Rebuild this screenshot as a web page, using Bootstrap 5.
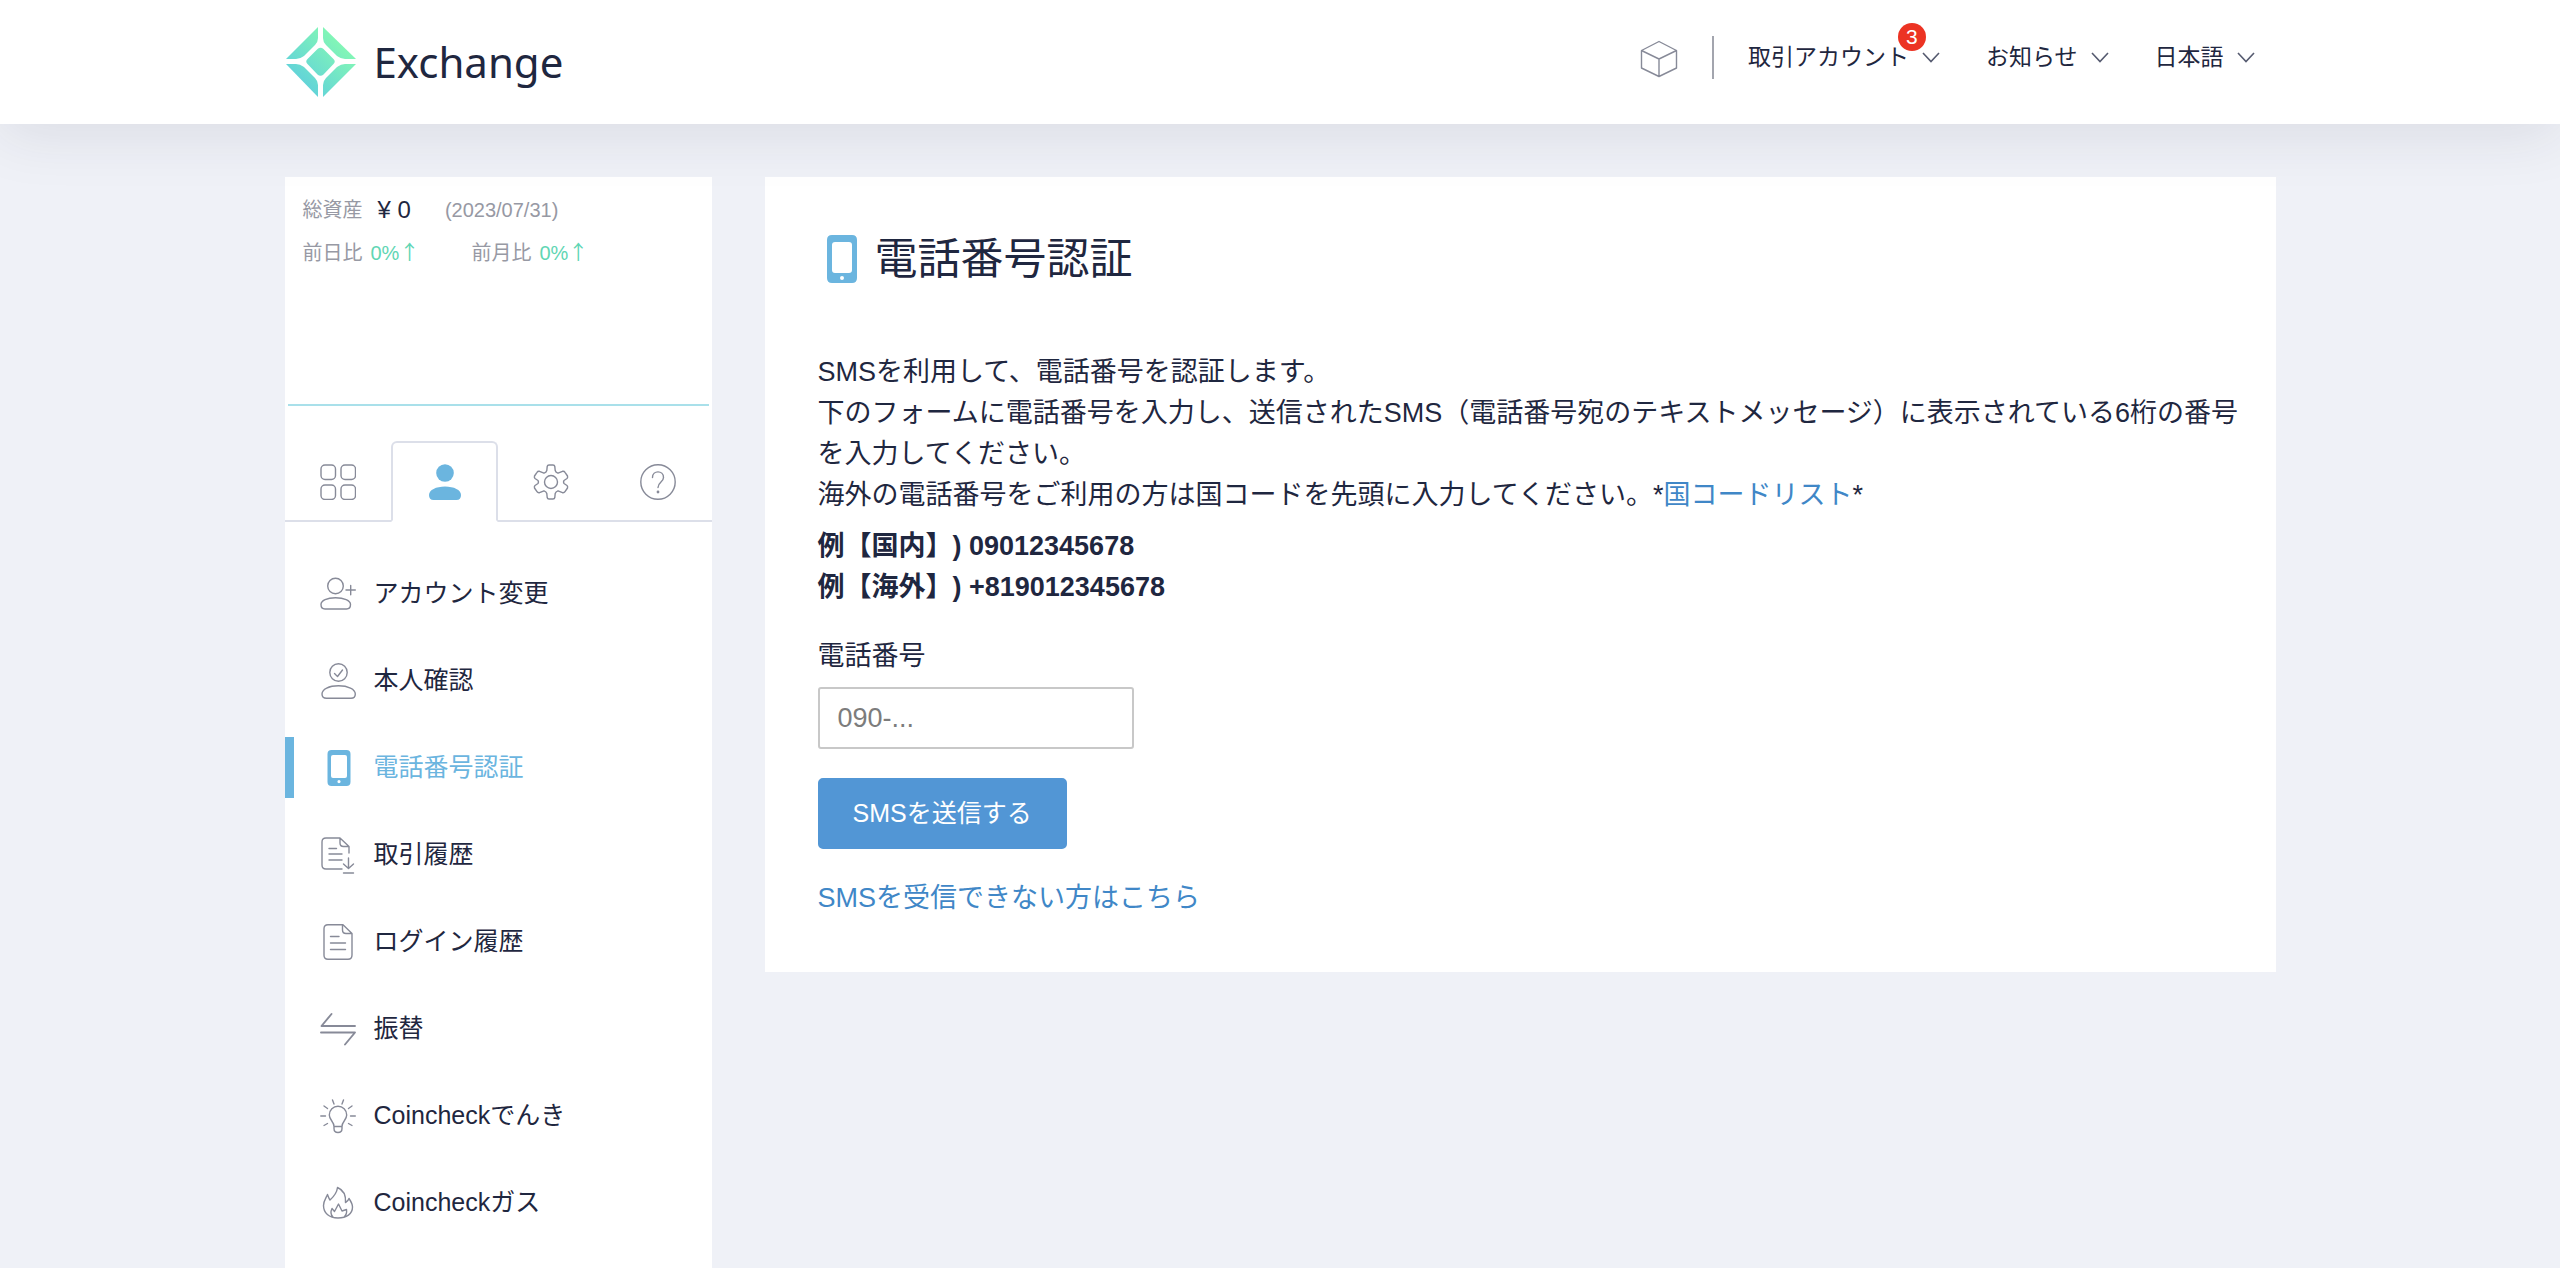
<!DOCTYPE html>
<html lang="ja">
<head>
<meta charset="utf-8">
<meta name="viewport" content="width=device-width, initial-scale=1">
<title>電話番号認証 | Exchange</title>
<link href="https://cdn.jsdelivr.net/npm/bootstrap@5.3.0/dist/css/bootstrap.min.css" rel="stylesheet">
<style>
  :root { --ink: #1f2740; --muted: #9799a4; --accent: #6bb5df; --link: #4087c7; --rule: #dcdfe9; }
  body { background: #eff1f7; color: var(--ink); font-family: "Liberation Sans", "Noto Sans CJK JP", sans-serif; font-size: 27px; line-height: 41px; text-spacing-trim: space-all; }
  a { color: var(--link); text-decoration: none; }
  .page-wrap { max-width: 1991px; width: 100%; }
  .site-header { height: 124px; box-shadow: 0 10px 60px rgba(40, 42, 56, .1); z-index: 2; }
  .brand-link { color: var(--ink); gap: 17px; }
  .brand-link span { font-family: "Noto Sans", sans-serif; font-size: 42px; line-height: 56px; }
  .top-nav { font-size: 23px; line-height: 36px; gap: 46px; padding: 0 21px 10px 0; }
  .top-nav .nav-link { color: var(--ink); gap: 13px; }
  .top-nav .nav-divider { width: 2px; height: 43px; background: #a3a5ae; margin: 0 -12px; }
  .count-badge { font-size: 21px; line-height: 28px; width: 28px; height: 28px; padding: 0; font-weight: 400; background: #ec3323; top: -2px; right: 14px; }
  .ico { fill: none; stroke: #878a98; stroke-width: 1.4; stroke-linecap: round; stroke-linejoin: round; flex: none; }
  .ico.is-solid { fill: var(--accent); stroke: none; }
  .page-body { gap: 53px; padding-top: 53px; }
  .side-panel { width: 427px; flex: none; }
  .asset-box { padding: 13px 18px 0; font-size: 20px; line-height: 40px; color: var(--muted); }
  .asset-box .total-num { font-size: 24px; color: var(--ink); margin: 0 34px 0 15px; }
  .asset-row + .asset-row { margin-top: 2px; }
  .asset-row .rate { color: #5fd6b4; margin: 0 52px 0 8px; }
  .asset-row .rate i { font-family: "Noto Sans CJK JP", sans-serif; font-style: normal; }
  .asset-chart { height: 133px; margin: 0 3px; border-bottom: 2px solid #a9e0ea; }
  .side-tabs { margin-top: 35px; border-bottom: 2px solid var(--rule); }
  .side-tabs .nav-link { border: 2px solid transparent; border-radius: 6px 6px 0 0; height: 81px; margin-bottom: -2px; padding: 0; }
  .side-tabs .nav-link.active { border-color: var(--rule) var(--rule) #fff; background: #fff; }
  .side-menu { gap: 26px; padding: 41px 0 24px; font-size: 25px; line-height: 37px; }
  .side-menu .nav-link { color: var(--ink); gap: 18px; height: 61px; padding: 0 26px; border-left: 9px solid transparent; }
  .side-menu .nav-link.active { color: var(--accent); border-left-color: var(--accent); }
  .main-panel { padding: 53px 32px 53px 53px; min-width: 0; }
  .main-title { font-size: 43px; line-height: 58px; gap: 9px; margin-bottom: 64px; font-weight: 400; }
  .intro { margin-bottom: 10px; }
  .examples { margin-bottom: 28px; font-weight: 700; }
  .phone-label { margin-bottom: 10px; }
  .phone-input { width: 316px; height: 62px; border: 2px solid #c8c8c8; border-radius: 3px; font-size: 27px; padding: 0 18px; margin-bottom: 29px; }
  .phone-input::placeholder { color: #7c7c7c; }
  .send-btn { --bs-btn-bg: #5296d5; --bs-btn-border-color: #5296d5; --bs-btn-hover-bg: #4387c6; --bs-btn-color: #fff; font-size: 25px; line-height: 37px; padding: 15px 33px; border-radius: 5px; border-width: 2px; margin-bottom: 29px; }
</style>
<script src="https://cdn.jsdelivr.net/npm/bootstrap@5.3.0/dist/js/bootstrap.bundle.min.js" defer></script>
</head>
<body class="d-flex flex-column min-vh-100">

<header class="site-header bg-white position-relative">
  <div class="page-wrap mx-auto h-100 d-flex align-items-center justify-content-between">
    <a class="brand-link d-flex align-items-center" href="#">
      <svg width="72" height="72" viewBox="0 0 72 72" aria-hidden="true">
        <defs><linearGradient id="mint" gradientUnits="userSpaceOnUse" x1="12" y1="60" x2="60" y2="12"><stop offset="0" stop-color="#5fd0dc"/><stop offset="1" stop-color="#86fab2"/></linearGradient></defs>
        <g fill="url(#mint)">
          <path d="M33 1V12Q33 16 30 19L19 30Q15 33 11 33H1Z"/>
          <path d="M38 1V12Q38 16 41 19L52 30Q56 33 60 33H71Z"/>
          <path d="M33 71V59Q33 55 30 52L19 41Q15 38 11 38H1Z"/>
          <path d="M38 71V59Q38 55 41 52L52 41Q56 38 60 38H71Z"/>
          <path d="M32.500 23Q35.500 20.500 38.500 23L48.500 33Q51 35.500 48.500 38L38.500 48.500Q35.500 51 32.500 48.500L22.500 38Q20 35.500 22.500 33Z"/>
        </g>
      </svg>
      <span>Exchange</span>
    </a>
    <nav class="top-nav nav align-items-center flex-nowrap" aria-label="メイン">
      <a class="d-flex pt-1" href="#" aria-label="ブロック">
        <svg class="ico" width="38" height="38" viewBox="0 0 38 38"><path d="M19 1.500L36.500 10.500V28L19 36.500L1.500 28V10.500ZM1.500 10.500L19 19L36.500 10.500M19 19V36.500"/></svg>
      </a>
      <div class="nav-divider"></div>
      <a class="nav-link p-0 d-flex align-items-center position-relative" href="#">取引アカウント
        <svg width="18" height="11" viewBox="0 0 18 11" fill="none" stroke="#565b70" stroke-width="1.600"><path d="M1 1L9 9.500L17 1"/></svg>
        <span class="count-badge badge rounded-circle position-absolute translate-middle-y">3</span>
      </a>
      <a class="nav-link p-0 d-flex align-items-center" href="#">お知らせ
        <svg width="18" height="11" viewBox="0 0 18 11" fill="none" stroke="#565b70" stroke-width="1.600"><path d="M1 1L9 9.500L17 1"/></svg>
      </a>
      <a class="nav-link p-0 d-flex align-items-center" href="#">日本語
        <svg width="18" height="11" viewBox="0 0 18 11" fill="none" stroke="#565b70" stroke-width="1.600"><path d="M1 1L9 9.500L17 1"/></svg>
      </a>
    </nav>
  </div>
</header>

<div class="page-body page-wrap mx-auto d-flex flex-grow-1">
  <aside class="side-panel bg-white">
    <div class="asset-box">
      <div class="asset-row d-flex align-items-center"><span>総資産</span><span class="total-num">¥ 0</span><span>(2023/07/31)</span></div>
      <div class="asset-row d-flex align-items-center"><span>前日比</span><span class="rate">0%<i>↑</i></span><span>前月比</span><span class="rate">0%<i>↑</i></span></div>
    </div>
    <div class="asset-chart"></div>

    <nav class="side-tabs nav nav-fill" aria-label="カテゴリ">
      <a class="nav-item nav-link d-flex align-items-center justify-content-center" href="#" aria-label="ホーム">
        <svg class="ico" width="36" height="36" viewBox="0 0 36 36"><rect x="1" y="1" width="14.500" height="14.500" rx="4"/><rect x="21" y="1" width="14.500" height="14.500" rx="4"/><rect x="1" y="21" width="14.500" height="14.500" rx="4"/><rect x="21" y="21" width="14.500" height="14.500" rx="4"/></svg>
      </a>
      <a class="nav-item nav-link active d-flex align-items-center justify-content-center" href="#" aria-label="アカウント">
        <svg class="ico is-solid" width="36" height="36" viewBox="0 0 36 36"><circle cx="18" cy="9" r="8.800"/><path d="M2 31C2 26 9 22.500 18 22.500S34 26 34 31Q34 36 29.500 36H6.500Q2 36 2 31Z"/></svg>
      </a>
      <a class="nav-item nav-link d-flex align-items-center justify-content-center" href="#" aria-label="設定">
        <svg class="ico" width="36" height="36" viewBox="0 0 36 36"><circle cx="18" cy="18" r="6.500"/><path d="M16 1H20Q21.500 1 21.800 2.500L22.200 6.500Q22.800 8.500 25 9.200L29.500 7.300Q31.200 7 32 8.300L34.500 12Q35 13.500 34 14.500L31 16.500Q30 18 31 19.500L34 21.500Q35 22.500 34.500 24L32 27.700Q31.200 29 29.500 28.700L25 26.800Q22.800 27.500 22.200 29.500L21.800 33.500Q21.500 35 20 35H16Q14.500 35 14.200 33.500L13.800 29.500Q13.200 27.500 11 26.800L6.500 28.700Q4.800 29 4 27.700L1.500 24Q1 22.500 2 21.500L5 19.500Q6 18 5 16.500L2 14.500Q1 13.500 1.500 12L4 8.300Q4.800 7 6.500 7.300L11 9.200Q13.200 8.500 13.800 6.500L14.200 2.500Q14.500 1 16 1Z"/></svg>
      </a>
      <a class="nav-item nav-link d-flex align-items-center justify-content-center" href="#" aria-label="ヘルプ">
        <svg class="ico" width="36" height="36" viewBox="0 0 36 36"><circle cx="18" cy="18" r="17.200"/><path d="M12.500 13.500C12.500 6 23.500 6 23.500 13.500C23.500 18 18 18 18 23.500"/><circle cx="18" cy="28" r=".7" fill="#878a98"/></svg>
      </a>
    </nav>

    <nav class="side-menu nav flex-column" aria-label="アカウントメニュー">
      <a class="nav-link d-flex align-items-center" href="#">
        <svg class="ico" width="36" height="36" viewBox="0 0 36 36"><circle cx="15.500" cy="10" r="7.800"/><path d="M1 28.500C1 24.500 7 21.800 15.500 21.800S30.500 24.500 30.500 28.500Q30.500 33 26.500 33H5Q1 33 1 28.500ZM26 14H35.300M30.700 9.500V18.800"/></svg>アカウント変更</a>
      <a class="nav-link d-flex align-items-center" href="#">
        <svg class="ico" width="36" height="36" viewBox="0 0 36 36"><circle cx="18.500" cy="9.500" r="8.700"/><path d="M2 31C2 26 9 22.800 18.500 22.800S35.300 26 35.300 31Q35.300 35.300 31 35.300H6.500Q2 35.300 2 31ZM14.500 10.500L17.500 13.500L22.500 7"/></svg>本人確認</a>
      <a class="nav-link active d-flex align-items-center" href="#" aria-current="page">
        <svg class="ico is-solid" width="36" height="36" viewBox="0 0 36 36"><path fill-rule="evenodd" d="M11.500 0H26.500Q30.500 0 30.500 4V32Q30.500 36 26.500 36H11.500Q7.500 36 7.500 32V4Q7.500 0 11.500 0ZM13 5Q11 5 11 7V26Q11 28 13 28H25Q27 28 27 26V7Q27 5 25 5ZM19 30A1.600 1.600 0 1 0 19 33.200A1.600 1.600 0 1 0 19 30Z"/></svg>電話番号認証</a>
      <a class="nav-link d-flex align-items-center" href="#">
        <svg class="ico" width="36" height="38" viewBox="0 0 36 38"><path d="M22 33H6Q2 33 2 29V6Q2 2 6 2H20L29 10.500V17M20 2V7Q20 10.500 23.500 10.500H29M9 12.500H16.500M9 18H22M9 24H22M28.500 22V32M23.500 28L28.500 32.500L33.500 28M23.500 37H33.500"/></svg>取引履歴</a>
      <a class="nav-link d-flex align-items-center" href="#">
        <svg class="ico" width="36" height="36" viewBox="0 0 36 36"><path d="M8 .8H23L32 9.500V31Q32 35.300 28 35.300H8Q4 35.300 4 31.300V4.800Q4 .8 8 .8ZM22.500 .8V6Q22.500 9.500 26 9.500H32M10.500 12.500H19M10.500 19H25.500M10.500 25.500H25.500"/></svg>ログイン履歴</a>
      <a class="nav-link d-flex align-items-center" href="#">
        <svg class="ico" width="36" height="36" viewBox="0 0 36 36"><path d="M35 15H1.500L11.500 3M1 21.500H35L25 33.500" stroke-width="1.900"/></svg>振替</a>
      <a class="nav-link d-flex align-items-center" href="#">
        <svg class="ico" width="36" height="36" viewBox="0 0 36 36"><path d="M14 28.500C14 23.500 9.300 22 9.300 17A8.700 8.700 0 0 1 26.700 17C26.700 22 22 23.500 22 28.500ZM14 28.500V30.500Q14 34.500 18 34.500T22 30.500V28.500M.8 18H5.500M30.500 18H35.300M4 8L7.500 10.500M32 8L28.500 10.500M12.500 2L14 6M23.500 2L22 6M4 27.500L7.500 25.500M32 27.500L28.500 25.500"/></svg>Coincheckでんき</a>
      <a class="nav-link d-flex align-items-center" href="#">
        <svg class="ico" width="36" height="36" viewBox="0 0 36 36"><path d="M18 33C9 33 3.500 28 3.500 20.500C3.500 16 6 13 7.500 9.500C8.300 11.500 8.500 13 10 15C15 10.500 17 7 17.500 2.500C23.500 5 26 10 25.500 17.500C27.500 16.500 28.500 15 29 13.500C31 16.500 32.500 19 32.500 22C32.500 29 26.500 33 18 33ZM13 32C10.500 29.500 10.500 26.500 12 23.500L14.500 26.500L18.500 19L22 26L26.500 24.500C27 28 26 30.500 24 32"/></svg>Coincheckガス</a>
    </nav>
  </aside>

  <main class="main-panel bg-white flex-grow-1 align-self-start">
    <h1 class="main-title d-flex align-items-center">
      <svg class="ico is-solid" width="48" height="48" viewBox="0 0 48 48"><path fill-rule="evenodd" d="M14 0H34Q39 0 39 5V43Q39 48 34 48H14Q9 48 9 43V5Q9 0 14 0ZM17 7Q14 7 14 10V35Q14 38 17 38H31Q34 38 34 35V10Q34 7 31 7ZM24 41A2 2 0 1 0 24 45A2 2 0 1 0 24 41Z"/></svg>
      電話番号認証
    </h1>
    <p class="intro">SMSを利用して、電話番号を認証します。<br>下のフォームに電話番号を入力し、送信されたSMS（電話番号宛のテキストメッセージ）に表示されている6桁の番号を入力してください。<br>海外の電話番号をご利用の方は国コードを先頭に入力してください。*<a href="#">国コードリスト</a>*</p>
    <p class="examples">例【国内】) 09012345678<br>例【海外】) +819012345678</p>
    <form onsubmit="return false">
      <label class="phone-label d-block" for="phone">電話番号</label>
      <input class="phone-input form-control" id="phone" type="tel" placeholder="090-...">
      <button class="send-btn btn btn-primary d-block" type="submit">SMSを送信する</button>
    </form>
    <a class="d-block" href="#">SMSを受信できない方はこちら</a>
  </main>
</div>
</body>
</html>
